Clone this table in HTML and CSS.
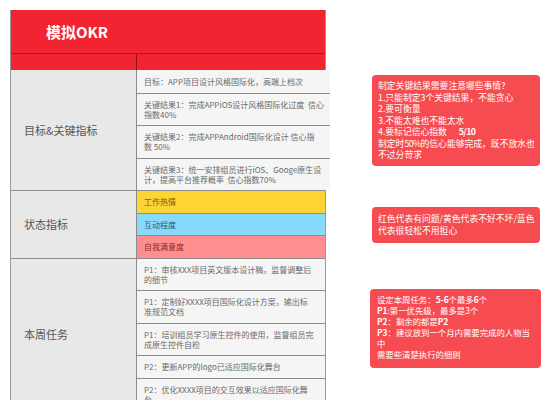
FILE: index.html
```html
<!DOCTYPE html>
<html lang="zh">
<head>
<meta charset="utf-8">
<link rel="stylesheet" href="styles.css">
</head>
<body>
<div class="page">
  <div class="okr">
    <div class="title">模拟OKR</div>
    <div class="subhead"><div class="sub-left"></div><div class="sub-right"></div></div>
    <div class="section s1">
      <div class="label">目标&amp;关键指标</div>
      <div class="cells">
        <div class="cell">目标：APP项目设计风格国际化，高端上档次</div>
        <div class="cell">关键结果1：完成APPiOS设计风格国际化过度&nbsp; 信心<br>指数40%</div>
        <div class="cell">关键结果2：完成APPAndroid国际化设计 信心指<br>数 50%</div>
        <div class="cell">关键结果3：统一安排组员进行iOS、Googe原生设<br>计，提高平台推荐概率&nbsp; 信心指数70%</div>
      </div>
    </div>
    <div class="section s2">
      <div class="label">状态指标</div>
      <div class="cells">
        <div class="cell yellow">工作热情</div>
        <div class="cell blue">互动程度</div>
        <div class="cell pink">自我满意度</div>
      </div>
    </div>
    <div class="section s3">
      <div class="label">本周任务</div>
      <div class="cells">
        <div class="cell">P1：审核XXX项目英文版本设计稿，监督调整后<br>的细节</div>
        <div class="cell">P1：定制好XXXX项目国际化设计方案，输出标<br>准规范文档</div>
        <div class="cell">P1：培训组员学习原生控件的使用，监督组员完<br>成原生控件自检</div>
        <div class="cell">P2：更新APP的logo已适应国际化舞台</div>
        <div class="cell">P2：优化XXXX项目的交互效果以适应国际化舞<br>台</div>
      </div>
    </div>
  </div>
  <div class="notes">
    <div class="note n1">制定关键结果需要注意哪些事情?<br>1.只能制定3个关键结果，不能贪心<br>2.要可衡量<br>3.不能太难也不能太水<br>4.要标记信心指数&nbsp;&nbsp;&nbsp;&nbsp;&nbsp; <b class="num">5/10</b><br>制定时<span class="num">50%</span>的信心能够完成，既不放水也<br>不过分苛求</div>
    <div class="note n2">红色代表有问题/黄色代表不好不坏/蓝色<br>代表很轻松不用担心</div>
    <div class="note n3">设定本周任务：<b>5-6</b>个最多<b>6</b>个<br><b>P1</b>:第一优先级，最多是3个<br><b>P2</b>：剩余的都是<b>P2</b><br><b>P3</b>：建议放到一个月内需要完成的人物当<br>中<br>需要些清楚执行的细则</div>
  </div>
</div>
</body>
</html>
```

FILE: styles.css
```css
* { box-sizing: border-box; }
html, body { margin: 0; padding: 0; background: #ffffff; }
body {
  font-family: "Noto Sans CJK SC", "Noto Sans", sans-serif;
  width: 549px;
  height: 400px;
  overflow: hidden;
}
.page {
  display: flex;
  align-items: flex-start;
  padding: 10px 0 0 10px;
}
.okr {
  width: 316px;
  border: 1px solid #9a9a9a;
  border-top: none;
  flex-shrink: 0;
}
.title {
  height: 43px;
  background: #f32432;
  color: #ffffff;
  font-size: 15px;
  font-weight: 700;
  display: flex;
  align-items: center;
  padding-left: 35px;
}
.subhead {
  display: grid;
  grid-template-columns: 125px 1fr;
  height: 17px;
  background: #f32432;
  border-top: 1px solid #b01520;
}
.sub-right { border-left: 1px solid #8a1a20; }
.section {
  display: grid;
  grid-template-columns: 125px 1fr;
}
.label {
  background: #e8e8e8;
  color: #555555;
  font-size: 11px;
  display: flex;
  align-items: center;
  padding-left: 13px;
  border-top: 1px solid #8c8c8c;
}
.s1 .label { border-top: none; }
.cells { display: flex; flex-direction: column; }
.cell {
  background: #f5f5f5;
  border-left: 1px solid #8c8c8c;
  border-top: 1px solid #8c8c8c;
  color: #6a6a6a;
  font-size: 8px;
  line-height: 10px;
  padding: 6px 6px 5.5px 7px;
  white-space: nowrap;
}
.s1 .cell:first-child { border-top: none; padding-top: 7px; }
.yellow { background: #fcd535; color: #7a5a10; }
.blue { background: #88dafa; color: #2a5a7a; }
.pink { background: #ff8e8e; color: #8a2a2a; }
.notes {
  display: flex;
  flex-direction: column;
  margin-left: 46px;
}
.note {
  background: #f64b50;
  color: #ffffff;
  font-size: 8.8px;
  line-height: 11.5px;
  border-radius: 4px;
  padding: 5px 6px 4px 6px;
  white-space: nowrap;
  width: 168px;
}
.note b { font-weight: 700; }
.num { letter-spacing: -0.6px; }
.n1 { margin-top: 65px; height: 91px; }
.n2 { margin-top: 41px; height: 36px; padding-top: 6px; }
.n3 {
  margin-top: 46px;
  margin-left: -2px;
  width: 171px;
  height: 79px;
  padding-left: 7px;
  font-size: 8.4px;
  line-height: 11.1px;
}
```
